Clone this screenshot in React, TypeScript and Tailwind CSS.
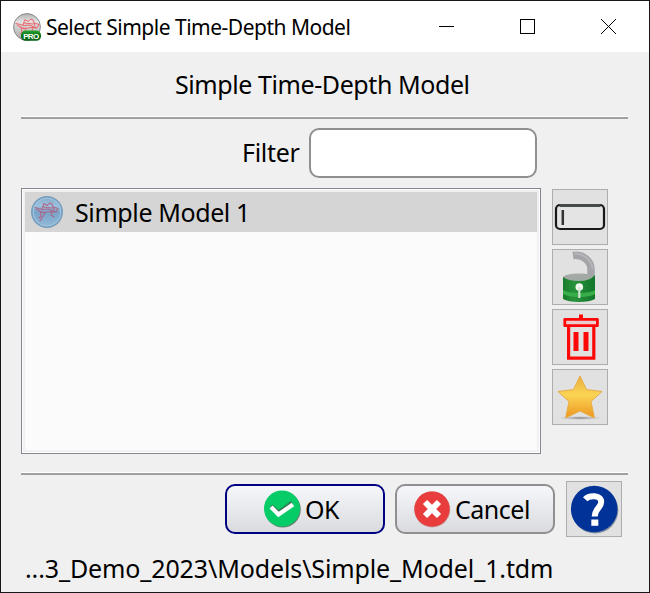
import React from "react";

const textFont = "font-['Noto_Sans','Liberation_Sans',sans-serif]";

function Label({ children, className = "" }: { children: React.ReactNode; className?: string }) {
  return (
    <span className={`whitespace-pre text-[25px] leading-[34px] text-black ${textFont} ${className}`}>
      {children}
    </span>
  );
}

function Hat() {
  return (
    <g fill="none" strokeLinecap="round" strokeLinejoin="round">
      <path d="M3 10.5L11 12.5L16 12L24 15L26 11.5L21 10" />
      <path d="M10 12L12 6.5L15 8.5L18 6L20 7L22 13M4 12L10 15.5L20 14.5L23 15" />
      <path d="M11 10L20 11M8 14L9 19L7 21M10 15L13 16L8 24M20 15L19 18L22 20" />
    </g>
  );
}

function AppIcon() {
  return (
    <svg className="h-7 w-7 shrink-0" viewBox="0 0 28 28">
      <defs>
        <linearGradient id="silver" x2="0" y2="1">
          <stop stopColor="#b2b2b2" />
          <stop offset=".3" stopColor="#e1e1e1" />
          <stop offset="1" stopColor="#aaa" />
        </linearGradient>
        <linearGradient id="pro" x2="0" y2="1">
          <stop stopColor="#26a332" />
          <stop offset=".5" stopColor="#087414" />
          <stop offset="1" stopColor="#056018" />
        </linearGradient>
      </defs>
      <circle cx="14" cy="14" r="13.4" fill="url(#silver)" stroke="#898989" />
      <g stroke="#ee5960" strokeWidth="0.9"><Hat /></g>
      <rect x="8" y="17.6" width="20" height="10.2" rx="4.5" fill="url(#pro)" />
      <text x="18.2" y="25.6" textAnchor="middle" textLength="16" fontSize="8" fontWeight="700" fill="white" fontFamily="Liberation Sans, sans-serif">PRO</text>
    </svg>
  );
}

function ModelIcon() {
  return (
    <svg className="h-8 w-8 shrink-0" viewBox="0 0 32 32">
      <defs>
        <linearGradient id="blue" x2="0" y2="1">
          <stop stopColor="#86a9c8" />
          <stop offset=".3" stopColor="#9bc1df" />
          <stop offset=".5" stopColor="#79a4c9" />
          <stop offset="1" stopColor="#92b9d7" />
        </linearGradient>
      </defs>
      <circle cx="16" cy="16" r="15.3" fill="url(#blue)" stroke="#789dbd" strokeWidth="1.4" />
      <circle cx="16" cy="16" r="13.8" fill="none" stroke="#9fc6df" strokeWidth="1" />
      <g stroke="#b5597a" strokeWidth="1.2" opacity=".8" transform="translate(1 1)"><Hat /></g>
    </svg>
  );
}

function RenameIcon() {
  return (
    <svg className="h-[54px] w-[54px]" viewBox="0 0 54 54">
      <rect x="3" y="15" width="48" height="24" rx="4" fill="#e4e4e4" stroke="#181818" strokeWidth="2.2" />
      <path d="M6.5 15.5H47.5" stroke="#454a46" strokeWidth="3" />
      <path d="M9.8 20V35" stroke="#333" strokeWidth="2.5" />
    </svg>
  );
}

function LockIcon() {
  return (
    <svg className="h-[54px] w-[54px]" viewBox="0 0 54 54">
      <defs>
        <linearGradient id="lock"><stop stopColor="#187b2b" /><stop offset=".35" stopColor="#27933a" /><stop offset="1" stopColor="#12762a" /></linearGradient>
      </defs>
      <ellipse cx="26" cy="27.5" rx="16" ry="4" fill="#a3a9a5" />
      <path d="M20 5.5C31 4 38 12 38 19V26" fill="none" stroke="#a5a5a9" strokeWidth="7.5" />
      <path d="M21 3.5C31 3 39 11 39.5 19" fill="none" stroke="#b5b5b9" strokeWidth="2" />
      <path d="M10 27Q15 31 26 31Q37 31 42 25V49Q37 52 26 52Q15 52 10 49Z" fill="url(#lock)" />
      <path d="M10 40Q15 43 26 43Q38 43 42 40V44Q38 47 26 47Q15 47 10 44Z" fill="#38ae4a" />
      <circle cx="26.3" cy="37" r="3.8" fill="#f2f7f0" />
      <path d="M26.3 37V48" stroke="#d4e4d4" strokeWidth="2.2" />
    </svg>
  );
}

function TrashIcon() {
  return (
    <svg className="h-[54px] w-[54px]" viewBox="0 0 54 54" fill="none" stroke="#fd0808">
      <path d="M11.8 9.3H44.4V15.7H11.8Z" fill="#efcccc" strokeWidth="2.8" strokeLinejoin="round" />
      <path d="M15.6 17V48.2H40.8V17" strokeWidth="3.2" />
      <path d="M28 4.5V9" strokeWidth="4" />
      <path d="M23 22V41M33 22V41" strokeWidth="5" />
    </svg>
  );
}

function StarIcon() {
  return (
    <svg className="h-[54px] w-[54px]" viewBox="0 0 54 54">
      <defs>
        <linearGradient id="star" x2="0" y2="1"><stop stopColor="#e7ac3d" /><stop offset=".45" stopColor="#fbd555" /><stop offset="1" stopColor="#ed951f" /></linearGradient>
        <radialGradient id="shade"><stop stopColor="#777" /><stop offset="1" stopColor="#ccc" stopOpacity="0" /></radialGradient>
      </defs>
      <ellipse cx="27" cy="48" rx="25" ry="2" fill="url(#shade)" />
      <path d="M27 6L33.5 19.5L49 21.5L38 31.5L41.5 48L27 41L12.5 48L16 31.5L5 21.5L20.5 19.5Z" fill="url(#star)" stroke="#e8ae49" strokeWidth="1" strokeLinejoin="round" />
    </svg>
  );
}

function ToolButton({ children, label }: { children: React.ReactNode; label: string }) {
  return (
    <button aria-label={label} className="flex h-14 w-14 shrink-0 items-center justify-center border border-[#adadad] bg-[#e1e1e1]">
      {children}
    </button>
  );
}

function OkIcon() {
  return (
    <svg className="h-10 w-10 shrink-0" viewBox="0 0 40 40">
      <circle cx="20.8" cy="20.5" r="18" fill="#668271" />
      <circle cx="20" cy="19.5" r="18" fill="#05cc67" />
      <path d="M9 17L16.5 23.5L30 13.5" fill="none" stroke="#347b57" strokeWidth="4" />
      <path d="M9 18L16.5 25.5L31 15.5" fill="none" stroke="white" strokeWidth="4.2" />
    </svg>
  );
}

function CancelIcon() {
  return (
    <svg className="h-10 w-10 shrink-0" viewBox="0 0 40 40">
      <circle cx="20.2" cy="20.4" r="18" fill="#c79192" />
      <circle cx="20" cy="20" r="17.6" fill="#e93c3d" />
      <path d="M13 13L27 27M27 13L13 27" stroke="white" strokeWidth="6" />
    </svg>
  );
}

function HelpIcon() {
  return (
    <svg className="h-[54px] w-[54px]" viewBox="0 0 54 54">
      <circle cx="28" cy="28.2" r="23.3" fill="#8490a1" />
      <circle cx="27.2" cy="27" r="23.3" fill="#003298" />
      <path d="M18.2 17.2C22 13 34.2 12.5 34.2 20C34.2 26 27.7 26.5 27.7 34.5" fill="none" stroke="white" strokeWidth="6" />
      <path d="M24.3 37.5H31.3V43.8H24.3Z" fill="white" />
    </svg>
  );
}

function Divider() {
  return <div className="h-[3px] w-[607px] border-t border-white bg-[#a0a0a0]" />;
}

export default function App() {
  return (
    <main className="flex h-[593px] w-[650px] flex-col overflow-hidden border border-[#171717] bg-[#f0f0f0]">
      <header className="flex h-[51px] shrink-0 items-center bg-white pl-3">
        <AppIcon />
        <h1 className={`ml-[5px] whitespace-nowrap text-[21px] font-normal leading-8 tracking-[-0.5px] ${textFont}`}>Select Simple Time-Depth Model</h1>
        <svg className="ml-auto mr-8 h-4 w-[180px]" viewBox="0 0 180 16" fill="none" stroke="black" shapeRendering="crispEdges">
          <path d="M2 7.5H17M83.5 0.5H97.5V14.5H83.5Z" />
          <path d="M164 0L179 15M179 0L164 15" shapeRendering="auto" />
        </svg>
      </header>
      <section className="flex min-h-0 flex-1 flex-col pl-5">
        <div className="flex h-16 shrink-0 items-center pl-[154px]">
          <Label className="tracking-[-0.42px]">Simple Time-Depth Model</Label>
        </div>
        <Divider />
        <div className="mt-[9px] flex h-[50px] shrink-0 items-center pl-[221px]">
          <Label className="w-[67px] pb-0.5 tracking-[-0.3px]">Filter</Label>
          <input aria-label="Filter" className="h-[50px] w-[228px] rounded-[10px] border-2 border-[#8f8f8f] bg-white px-2 outline-none" />
        </div>
        <div className="mt-[10px] flex h-[266px] shrink-0 gap-[11px]">
          <div className="w-[520px] border border-[#828790] bg-white p-px">
            <div className="h-full border-2 border-[#f0f0f0] bg-[#fbfbfb]">
              <div className="flex h-10 items-center bg-[#d5d5d5] pl-[6px]">
                <ModelIcon />
                <Label className="ml-3 tracking-[-0.4px]">Simple Model 1</Label>
              </div>
            </div>
          </div>
          <div className="flex flex-col gap-1 pt-px">
            <ToolButton label="Rename"><RenameIcon /></ToolButton>
            <ToolButton label="Unlock"><LockIcon /></ToolButton>
            <ToolButton label="Delete"><TrashIcon /></ToolButton>
            <ToolButton label="Favorite"><StarIcon /></ToolButton>
          </div>
        </div>
        <div className="mt-[18px]"><Divider /></div>
        <div className="mt-[6px] flex h-14 shrink-0 items-center pl-[204px]">
          <button className="flex h-[50px] w-[160px] items-center rounded-[10px] border-2 border-[#000080] bg-linear-to-b from-[#f6f7fa] to-[#dadbde] pl-[35px]">
            <OkIcon /><Label className="ml-[3px] tracking-[-0.5px]">OK</Label>
          </button>
          <button className="ml-[10px] flex h-[50px] w-[160px] items-center rounded-[10px] border-2 border-[#8f8f91] bg-linear-to-b from-[#f6f7fa] to-[#dadbde] pl-[15px]">
            <CancelIcon /><Label className="ml-[3px] tracking-[-0.5px]">Cancel</Label>
          </button>
          <div className="ml-[11px]"><ToolButton label="Help"><HelpIcon /></ToolButton></div>
        </div>
        <Label className="ml-1 mt-[14px] tracking-[-0.12px]">...3_Demo_2023\Models\Simple_Model_1.tdm</Label>
      </section>
    </main>
  );
}
